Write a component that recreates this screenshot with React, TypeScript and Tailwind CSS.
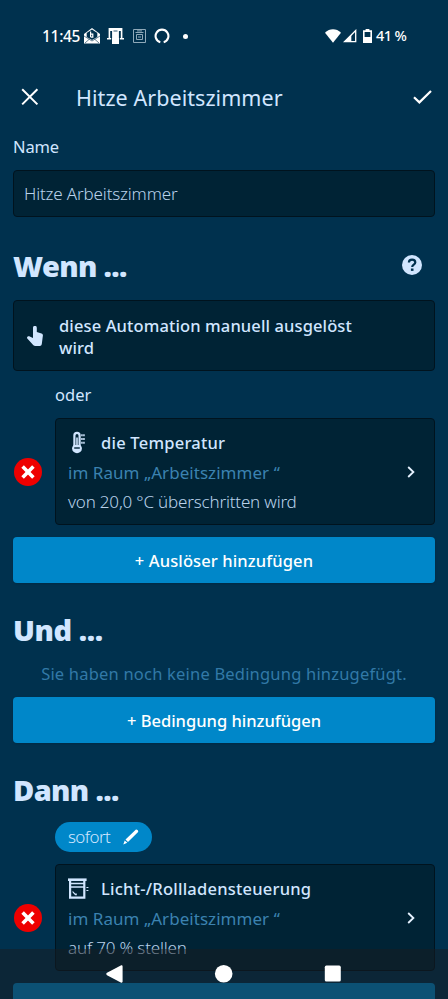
import React from 'react';

interface RuleCardProps {
  icon: React.ReactNode;
  title: string;
  detail: string;
}

const TemperatureIcon = () => (
  <svg width="22" height="24" viewBox="0 0 22 24" fill="none">
    <path d="M6.4 15V4.4a2.6 2.6 0 0 1 5.2 0V15" stroke="#d1e6ff" strokeWidth="2.2" />
    <path d="M8.2 6.5h1.6v9H8.2z" fill="#d1e6ff" />
    <path d="M6 14c-1.1.7-1.9 1.9-1.9 3.4a4.9 4.9 0 0 0 9.8 0c0-1.5-.8-2.7-1.9-3.4z" fill="#d1e6ff" />
    <path d="M6.2 17h5.6" stroke="#002335" strokeWidth="1.4" />
    <path d="M13.2 4.2h3.8M13.2 8h3.8M13.2 11.8h3.8" stroke="#d1e6ff" strokeWidth="2" strokeDasharray="1.5 0.5" />
  </svg>
);

const ShutterIcon = () => (
  <svg width="22" height="22" viewBox="0 0 22 22" fill="none" stroke="#d1e6ff">
    <path d="M0 1.7h18.6" strokeWidth="2.6" />
    <path d="M2.1 2v17.6h14.2V2" strokeWidth="2.2" />
    <path d="M2 5.5h14M2 9h14" strokeWidth="1.7" />
    <path d="M4.6 12.8v1.8l2.6 2.6h1.6v-1.6h-1.6z" fill="#d1e6ff" stroke="none" />
    <path d="M18.4 9.5h2M18.4 12.5h2" strokeWidth="1.1" />
  </svg>
);

const DeleteButton = () => (
  <button className="flex size-[28px] shrink-0 items-center justify-center rounded-full bg-[#ee0000]">
    <svg width="14" height="14" viewBox="0 0 14 14" stroke="white" strokeWidth="3.6">
      <path d="M1.6 1.6l10.8 10.8M12.4 1.6L1.6 12.4" />
    </svg>
  </button>
);

const RuleCard: React.FC<RuleCardProps> = ({ icon, title, detail }) => (
  <div className="flex items-center gap-[13px] pl-px">
    <DeleteButton />
    <div className="flex h-[107px] flex-1 items-center rounded border border-[#00131e] bg-[#002335] pl-[12px] pr-[19px]">
      <div className="flex-1 whitespace-nowrap">
        <div className="flex h-[29px] items-center">
          <span className="flex w-[33px]">{icon}</span>
          <span className="pt-[2px] text-[16.5px] font-medium tracking-[0.23px]">{title}</span>
        </div>
        <p className="h-[29px] text-[17px] leading-[31px] tracking-[0.05px] text-[#3b82b0]">im Raum „Arbeitszimmer “</p>
        <p className="h-[29px] text-[17px] font-light leading-[31px] tracking-[-0.18px] text-[#b9d2ea]">{detail}</p>
      </div>
      <svg width="8" height="12" viewBox="0 0 8 12" fill="none" stroke="#e6f2ff" strokeWidth="1.8">
        <path d="M1.2 1l5.2 5-5.2 5" />
      </svg>
    </div>
  </div>
);

const StatusBar = () => (
  <div className="flex h-[72px] items-center pl-[42px] pr-[41px] text-[15.5px] font-medium text-white">
    <span className="w-[42px] whitespace-nowrap pt-px tracking-[-0.3px]">11:45</span>
    <svg width="16" height="16" viewBox="0 0 16 16">
      <path d="M0 6l8-6 8 6v9.5H0z" fill="white" />
      <path d="M2.7 5L8 1.5 13.3 5v4L8 12 2.7 9z" fill="#00314e" />
      <path d="M6.6 3.5v5.6M6.6 6.1h2.2v3H6.6" fill="none" stroke="white" strokeWidth="1.2" />
      <path d="M0 8l8 5 8-5M1 15l4.5-4M15 15l-4.5-4" fill="none" stroke="#00314e" strokeWidth="0.6" />
    </svg>
    <svg className="ml-[7px]" width="17" height="16" viewBox="0 0 17 16">
      <path d="M1.6 0h13.8v10H17v1.5h-4.2V10h1V3H3.2v7h1v1.5H0V10h1.6z" fill="white" />
      <path d="M5 3h7v13H5z" fill="white" />
      <path d="M4.6 10V3M12.4 10V3M6.5 3h4" stroke="#00314e" strokeWidth="0.8" fill="none" />
    </svg>
    <svg className="ml-[9px]" width="13" height="14" viewBox="0 0 13 14" fill="none" stroke="#8fa9b9">
      <path d="M.5.5h12v13H.5z" />
      <path d="M2.5 3.5h8M3.5 5.5h6v5h-6zM5 8h3" />
      <path d="M4 1.9h5" />
    </svg>
    <svg className="ml-[8px]" width="16" height="16" viewBox="0 0 16 16" fill="none">
      <path d="M6.3 14.2A6.4 6.4 0 1 1 9.7 14.2" stroke="white" strokeWidth="2.1" />
    </svg>
    <span className="ml-[13px] size-[5px] rounded-full bg-white" />
    <svg className="ml-auto" width="16" height="14" viewBox="0 0 16 14" fill="white">
      <path d="M0 3.7C4.6-.9 11.4-.9 16 3.7L8 13.8z" />
    </svg>
    <svg className="ml-[2px]" width="14" height="14" viewBox="0 0 14 14">
      <path d="M12.7 1.5v11.2H1.5z" fill="none" stroke="white" strokeWidth="1.3" />
      <path d="M8.3 5.8V13H1z" fill="white" />
    </svg>
    <svg className="ml-[6px]" width="9" height="14" viewBox="0 0 9 14">
      <path d="M2.6 0h3.8v1.3H9V14H0V1.3h2.6z" fill="white" />
      <path d="M1.6 3h5.8v5H1.6z" fill="#00314e" />
    </svg>
    <span className="ml-[4px] w-[31px] whitespace-nowrap text-[14.5px] tracking-[-0.6px]">41 %</span>
  </div>
);

export default function App() {
  return (
    <div className="relative h-[999px] w-[448px] overflow-hidden bg-[#00314e] font-['Noto_Sans',sans-serif] text-[#d1e6ff]">
      <StatusBar />

      <header className="flex h-[50px] items-center pl-[21px] pr-[16px]">
        <svg width="18" height="18" viewBox="0 0 18 18" stroke="white" strokeWidth="2">
          <path d="M1.2 1.2l15.2 15.2M16.4 1.2L1.2 16.4" />
        </svg>
        <h1 className="ml-[37px] flex-1 whitespace-nowrap pt-[2px] text-[21.5px] tracking-[0.06px]">Hitze Arbeitszimmer</h1>
        <svg width="19" height="14" viewBox="0 0 19 14" fill="none" stroke="white" strokeWidth="2.2">
          <path d="M1 7.2l5.4 5.2L18 1" />
        </svg>
      </header>

      <main className="px-[13px]">
        <label className="block h-[48px] text-[16.5px] leading-[50px] tracking-[-0.15px]">Name</label>
        <div className="flex h-[47px] items-center rounded border border-[#00131e] bg-[#002335] pl-[10px] pt-px text-[17px] font-light tracking-[-0.15px] text-[#b9d2ea]">
          Hitze Arbeitszimmer
        </div>

        <div className="mt-[29px] flex h-[40px] items-center justify-between pr-[13px]">
          <h2 className="text-[29px] font-black tracking-[-0.65px]">Wenn ...</h2>
          <svg className="mb-[3px]" width="20" height="20" viewBox="0 0 20 20">
            <circle cx="10" cy="10" r="10" fill="#d1e6ff" />
            <path d="M6.9 7.6c0-4 6.4-3.8 6.4-.2 0 2.2-3.1 2.2-3.1 4.5" fill="none" stroke="#00314e" strokeWidth="2.2" />
            <path d="M8.9 13.5h2.6v2.4H8.9z" fill="#00314e" />
          </svg>
        </div>

        <div className="mt-[14px] flex h-[71px] items-center rounded border border-[#00131e] bg-[#002335] pl-[13px]">
          <svg className="mr-[16px] shrink-0" width="16" height="20" viewBox="0 0 16 20" fill="#d1e6ff">
            <path d="M6 1.8a1.9 1.9 0 0 1 3.8 0V6l4.7 1.4c1 .3 1.5 1.1 1.4 2L14.8 18c-.2 1.2-.9 2-2 2H8.3c-.8 0-1.3-.3-1.9-.8L.5 12.8c-1.3-1.4.2-3 1.7-2.5L6 12z" />
          </svg>
          <p className="whitespace-nowrap pt-[2px] text-[16.5px] font-medium leading-[22px] tracking-[0.12px]">
            diese Automation manuell ausgelöst
            <br />
            wird
          </p>
        </div>

        <p className="h-[47px] pl-[42px] text-[16.5px] leading-[48px]">oder</p>
        <RuleCard icon={<TemperatureIcon />} title="die Temperatur" detail="von 20,0 °C überschritten wird" />
        <button className="mt-[12px] flex h-[46px] w-full items-center justify-center rounded bg-[#0087c9] pt-[2px] text-[16.5px] font-medium tracking-[0.12px] text-white shadow">
          + Auslöser hinzufügen
        </button>

        <h2 className="mt-[27px] h-[40px] text-[29px] font-black leading-[40px] tracking-[-0.45px]">Und ...</h2>
        <p className="mt-[8px] h-[39px] whitespace-nowrap text-center text-[16.5px] leading-[32px] tracking-[0.2px] text-[#3279a7]">
          Sie haben noch keine Bedingung hinzugefügt.
        </p>
        <button className="flex h-[46px] w-full items-center justify-center rounded bg-[#0087c9] pt-[2px] text-[16.5px] font-medium text-white shadow">
          + Bedingung hinzufügen
        </button>

        <h2 className="mt-[27px] h-[40px] text-[29px] font-black leading-[40px] tracking-[-0.65px]">Dann ...</h2>
        <button className="mb-[12px] ml-[42px] mt-[12px] flex h-[30px] w-[97px] items-center justify-between rounded-full bg-[#0087c9] px-[13px] text-[17px] font-light tracking-[-0.6px]">
          sofort
          <svg width="16" height="16" viewBox="0 0 16 16" fill="white">
            <path d="M12.7.7c.9-.9 3 .9 2.4 2.2L5 13 2.5 10.5zM1.7 11.4l2.6 2.4L.3 15.6z" />
          </svg>
        </button>
        <RuleCard icon={<ShutterIcon />} title="Licht-/Rollladensteuerung" detail="auf 70 % stellen" />
        <div className="mt-[12px] h-[46px] rounded bg-[#0087c9]" />
      </main>

      {/* System navigation, translucent over the scrolling content */}
      <nav className="absolute inset-x-0 bottom-0 flex h-[50px] justify-center gap-[91px] bg-[#181c20]/50 pt-[15px]">
        <svg width="18" height="20" viewBox="0 0 18 20" fill="white">
          <path d="M1 8.8L14.8 1.4c1-.5 1.8 0 1.8 1v15.2c0 1-.8 1.5-1.8 1L1 11.2c-1-.6-1-1.8 0-2.4z" />
        </svg>
        <svg width="18" height="20" viewBox="0 0 18 20" overflow="visible">
          <circle cx="8.7" cy="9.7" r="8.8" fill="white" />
        </svg>
        <svg width="18" height="20" viewBox="0 0 18 20">
          <rect x="0.8" y="1.6" width="16" height="16" rx="1.6" fill="white" />
        </svg>
      </nav>
    </div>
  );
}
